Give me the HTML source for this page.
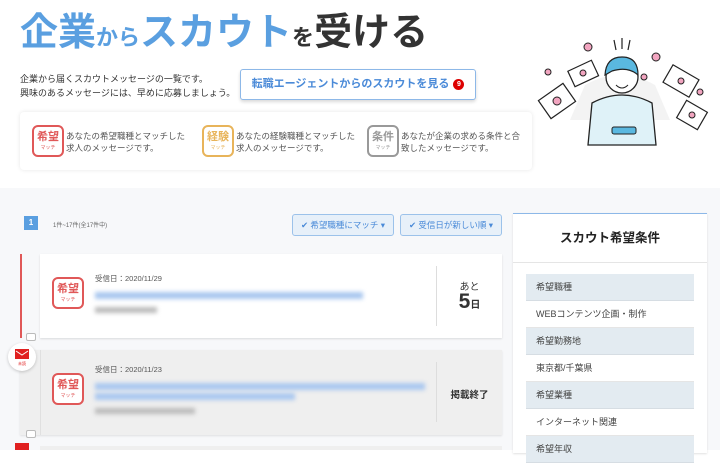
<!DOCTYPE html>
<html><head><meta charset="utf-8"><style>
*{margin:0;padding:0;box-sizing:border-box}
body{width:720px;height:450px;overflow:hidden;background:#fff;font-family:"Liberation Sans","Noto Sans CJK JP",sans-serif;color:#333;position:relative}
.abs{position:absolute}
.title{left:20px;top:9px;font-weight:bold;white-space:nowrap;line-height:48px}
.title .b{color:#5a9fe0}.title .big{font-size:38px}.title .sm{font-size:22px}.title .k{color:#333}
.desc{left:20px;top:72px;font-size:9px;line-height:14px;color:#333}
.btn{left:240px;top:69px;width:236px;height:31px;border:1px solid #8db8e8;border-radius:3px;box-shadow:0 2px 3px rgba(0,0,0,.15);color:#4a8ad8;font-size:11px;font-weight:bold;text-align:center;line-height:29px;background:#fff}
.badge{display:inline-block;width:11px;height:11px;border-radius:50%;background:#d00;color:#fff;font-size:7px;line-height:11px;vertical-align:1px;margin-left:4px}
.legend{left:20px;top:112px;width:512px;height:58px;border-radius:4px;box-shadow:0 0 4px rgba(0,0,0,.1);background:#fff}
.tag{position:absolute;width:32px;height:32px;border:2px solid;border-radius:6px;text-align:center;font-weight:bold;font-size:11px;line-height:14px;padding-top:3px}
.tag i{display:block;font-style:normal;font-size:5px;line-height:8px;font-weight:normal}
.lt{position:absolute;font-size:8.5px;line-height:12px;color:#555}
.grey{left:0;top:188px;width:720px;height:262px;background:#f7f8fa}
.card{background:#fff;box-shadow:0 1px 2px rgba(0,0,0,.12)}
.small{font-size:7.5px;color:#555}
.blur{filter:blur(2px)}
.row{position:absolute;left:13px;width:168px;height:27px;font-size:9px;line-height:27px;padding-left:10px;color:#444}
.h{background:#e3ebf1;border-bottom:1px solid #d6dde3}.w{background:#fff;border-bottom:1px solid #e5e5e5}
</style></head><body>
<div class="abs title"><span class="b big">企業</span><span class="b sm">から</span><span class="b big">スカウト</span><span class="k sm">を</span><span class="k big">受ける</span></div>
<div class="abs desc">企業から届くスカウトメッセージの一覧です。<br>興味のあるメッセージには、早めに応募しましょう。</div>
<div class="abs btn">転職エージェントからのスカウトを見る<span class="badge">9</span></div>
<div class="abs legend">
<div class="tag" style="left:12px;top:13px;border-color:#e05858;color:#e05858">希望<i>マッチ</i></div>
<div class="lt" style="left:46px;top:18px">あなたの希望職種とマッチした<br>求人のメッセージです。</div>
<div class="tag" style="left:182px;top:13px;border-color:#e8b45a;color:#e8b45a">経験<i>マッチ</i></div>
<div class="lt" style="left:216px;top:18px">あなたの経験職種とマッチした<br>求人のメッセージです。</div>
<div class="tag" style="left:347px;top:13px;border-color:#999;color:#999">条件<i>マッチ</i></div>
<div class="lt" style="left:381px;top:18px">あなたが企業の求める条件と合<br>致したメッセージです。</div>
</div>
<svg class="abs" style="left:530px;top:35px" width="180" height="115" viewBox="0 0 180 115">
<path d="M55 50 Q90 30 125 50 L140 85 L40 85Z" fill="#eee" opacity=".7"/>
<path d="M58 110 L62 68 Q92 52 122 68 L126 110Z" fill="#dff2f8" stroke="#222" stroke-width="1.3"/>
<circle cx="92" cy="42" r="16" fill="#fff" stroke="#222" stroke-width="1.3"/>
<path d="M75 40 Q76 22 92 22 Q108 22 108 40 Q98 31 82 36Z" fill="#5ab8e0" stroke="#222" stroke-width="1.2"/>
<path d="M86 50 Q92 56 98 50" fill="#fff" stroke="#222"/>
<rect x="82" y="92" width="24" height="7" rx="2" fill="#5ab8e0" stroke="#222"/>
<path d="M84 5 L86 15 M92 3 L92 14 M100 5 L98 15" stroke="#222" stroke-width="1.2"/>
<g fill="#fff" stroke="#222" stroke-width="1.2">
<rect x="12" y="55" width="30" height="22" transform="rotate(-35 27 66)"/>
<rect x="40" y="30" width="26" height="17" transform="rotate(-25 53 38)"/>
<rect x="136" y="36" width="30" height="20" transform="rotate(30 151 46)"/>
<rect x="150" y="70" width="24" height="20" transform="rotate(30 162 80)"/>
</g>
<g fill="#f2a5c0" stroke="#222" stroke-width="1">
<circle cx="27" cy="66" r="4"/><circle cx="58" cy="12" r="4"/><circle cx="18" cy="37" r="3"/><circle cx="126" cy="22" r="4"/><circle cx="151" cy="46" r="3"/><circle cx="170" cy="57" r="3"/><circle cx="114" cy="42" r="3"/><circle cx="53" cy="38" r="3"/><circle cx="162" cy="80" r="3"/>
</g>
</svg>
<div class="abs grey"></div>
<div class="abs" style="left:24px;top:216px;width:14px;height:14px;background:#5a9fe0;color:#fff;font-size:8px;text-align:center;line-height:14px;font-weight:bold">1</div>
<div class="abs" style="left:53px;top:220px;font-size:6px;color:#666">1件~17件(全17件中)</div>
<div class="abs" style="left:292px;top:214px;width:102px;height:22px;border:1px solid #9cc2ea;background:#e7f0f9;border-radius:3px;font-size:8.5px;color:#4a8ad8;line-height:20px;text-align:center">✔ 希望職種にマッチ ▾</div>
<div class="abs" style="left:400px;top:214px;width:102px;height:22px;border:1px solid #9cc2ea;background:#e7f0f9;border-radius:3px;font-size:8.5px;color:#4a8ad8;line-height:20px;text-align:center">✔ 受信日が新しい順 ▾</div>
<!-- card1 -->
<div class="abs" style="left:20px;top:254px;width:2px;height:84px;background:#e05858"></div>
<div class="abs card" style="left:40px;top:254px;width:462px;height:84px"></div>
<div class="abs" style="left:26px;top:333px;width:10px;height:8px;border:1px solid #bbb;border-radius:2px;background:#fff"></div>
<div class="tag abs" style="left:52px;top:277px;border-color:#e05858;color:#e05858">希望<i>マッチ</i></div>
<div class="abs small" style="left:95px;top:273px">受信日：2020/11/29</div>
<div class="abs blur" style="left:95px;top:292px;width:268px;height:7px;background:#a9c7ef"></div>
<div class="abs blur" style="left:95px;top:307px;width:62px;height:6px;background:#bbb"></div>
<div class="abs" style="left:436px;top:266px;width:1px;height:60px;background:#ddd"></div>
<div class="abs" style="left:437px;top:278px;width:65px;text-align:center;font-size:10px;color:#333">あと</div>
<div class="abs" style="left:437px;top:290px;width:65px;text-align:center;font-size:21px;font-weight:bold;color:#333">5<span style="font-size:10px">日</span></div>
<!-- card2 -->
<div class="abs" style="left:20px;top:350px;width:482px;height:85px;background:#efefef;box-shadow:0 1px 2px rgba(0,0,0,.1)"></div>
<div class="abs" style="left:40px;top:350px;width:1px;height:85px;background:#e0e0e0"></div>
<div class="abs" style="left:26px;top:430px;width:10px;height:8px;border:1px solid #bbb;border-radius:2px;background:#fff"></div>
<div class="abs" style="left:8px;top:343px;width:28px;height:28px;border-radius:50%;background:#fff;box-shadow:0 1px 3px rgba(0,0,0,.2)"></div>
<svg class="abs" style="left:15px;top:349px" width="14" height="10" viewBox="0 0 14 10"><rect width="14" height="10" fill="#e02020"/><path d="M1 2 L7 6 L13 2" stroke="#fff" fill="none" stroke-width="1"/></svg>
<div class="abs" style="left:15px;top:361px;width:14px;font-size:4px;color:#e02020;text-align:center">未読</div>
<div class="abs" style="left:15px;top:443px;width:14px;height:7px;background:#e02020"></div>
<div class="tag abs" style="left:52px;top:373px;border-color:#e05858;color:#e05858;background:#fff">希望<i>マッチ</i></div>
<div class="abs small" style="left:95px;top:364px">受信日：2020/11/23</div>
<div class="abs blur" style="left:95px;top:383px;width:330px;height:7px;background:#a9c7ef"></div>
<div class="abs blur" style="left:95px;top:393px;width:200px;height:7px;background:#a9c7ef"></div>
<div class="abs blur" style="left:95px;top:408px;width:100px;height:6px;background:#bbb"></div>
<div class="abs" style="left:436px;top:362px;width:1px;height:60px;background:#ddd"></div>
<div class="abs" style="left:437px;top:387px;width:65px;text-align:center;font-size:9.5px;font-weight:bold;color:#333">掲載終了</div>
<div class="abs" style="left:40px;top:446px;width:462px;height:4px;background:#efefef"></div>
<!-- sidebar -->
<div class="abs card" style="left:513px;top:213px;width:194px;height:240px;border-top:1px solid #8db8e8">
<div style="height:49px;border-bottom:1px solid #e5e5e5;text-align:center;line-height:49px;font-size:12.5px;font-weight:bold;color:#222">スカウト希望条件</div>
<div class="row h" style="top:60px">希望職種</div>
<div class="row w" style="top:87px">WEBコンテンツ企画・制作</div>
<div class="row h" style="top:114px">希望勤務地</div>
<div class="row w" style="top:141px">東京都/千葉県</div>
<div class="row h" style="top:168px">希望業種</div>
<div class="row w" style="top:195px">インターネット関連</div>
<div class="row h" style="top:222px">希望年収</div>
</div>
</body></html>
